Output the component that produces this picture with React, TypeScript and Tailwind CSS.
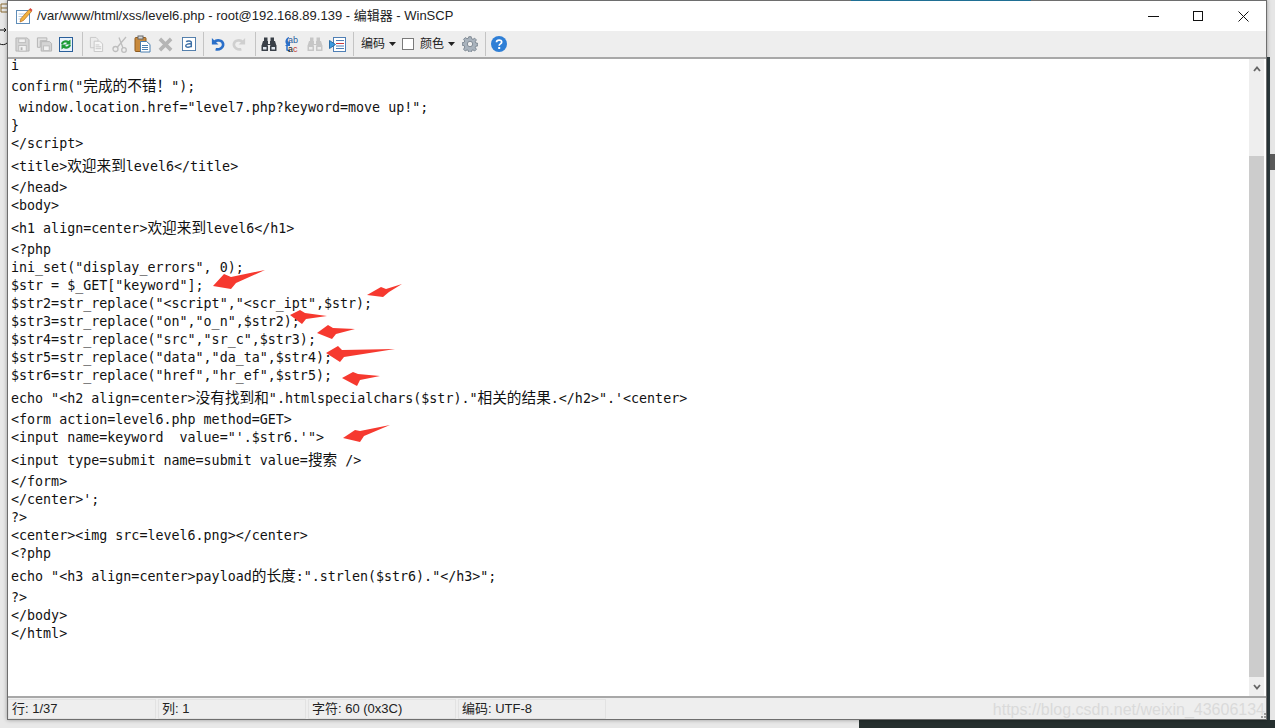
import React from "react";

const mono = "font-['DejaVu_Sans_Mono','Noto_Sans_CJK_SC',monospace]";

const lines: [string, number][] = [
  ["i", 21],
  ['confirm("完成的不错\uff01");', 21],
  [' window.location.href="level7.php?keyword=move up!";', 18],
  ["}", 18],
  ["</script>", 23],
  ["<title>欢迎来到level6</title>", 21],
  ["</head>", 18],
  ["<body>", 23],
  ["<h1 align=center>欢迎来到level6</h1>", 21],
  ["<?php", 18],
  ['ini_set("display_errors", 0);', 18],
  ['$str = $_GET["keyword"];', 18],
  ['$str2=str_replace("<script","<scr_ipt",$str);', 18],
  ['$str3=str_replace("on","o_n",$str2);', 18],
  ['$str4=str_replace("src","sr_c",$str3);', 18],
  ['$str5=str_replace("data","da_ta",$str4);', 18],
  ['$str6=str_replace("href","hr_ef",$str5);', 23],
  ['echo "<h2 align=center>没有找到和".htmlspecialchars($str)."相关的结果.</h2>".\'<center>', 21],
  ["<form action=level6.php method=GET>", 18],
  ['<input name=keyword  value="\'.$str6.\'">', 23],
  ["<input type=submit name=submit value=搜索 />", 21],
  ["</form>", 18],
  ["</center>';", 18],
  ["?>", 18],
  ["<center><img src=level6.png></center>", 18],
  ["<?php", 23],
  ['echo "<h3 align=center>payload的长度:".strlen($str6)."</h3>";', 21],
  ["?>", 18],
  ["</body>", 18],
  ["</html>", 18],
];

const Code = ({ text }: { text: string }) => (
  <>
    {text.split(/([\u4e00-\u9fff\uff01]+)/).map((part, i) =>
      i % 2 === 1 ? (
        <span key={i} className="text-[14.67px] leading-[0] font-['Noto_Sans_CJK_SC',sans-serif]">
          {part}
        </span>
      ) : (
        part
      )
    )}
  </>
);

const sepClass = "h-[24px] w-px shrink-0 bg-[#c4c4c4]";

const Disk = () => (
  <svg width="15" height="15" viewBox="0 0 16 16" fill="none">
    <path d="M1 1h12l2 2v12H1z" fill="#d4d4d4" stroke="#b4b4b4" />
    <rect x="4" y="2" width="7" height="4" fill="#f2f2f2" stroke="#bcbcbc" />
    <rect x="4" y="9" width="8" height="6" fill="#f2f2f2" stroke="#bcbcbc" />
    <rect x="6" y="11" width="2" height="3" fill="#b4b4b4" />
  </svg>
);

const Icons = {
  saveAll: (
    <svg width="17" height="16" viewBox="0 0 18 16" fill="none">
      <path d="M1.500 1.500h10v3h-7v7h-3z" fill="#e2e2e2" stroke="#b4b4b4" />
      <path d="M5.500 5.500h9l2 2v8h-11z" fill="#d4d4d4" stroke="#b4b4b4" />
      <rect x="8" y="10" width="6" height="5" fill="#f2f2f2" stroke="#bcbcbc" />
    </svg>
  ),
  reload: (
    <svg width="14" height="15" viewBox="0 0 14 15" fill="none">
      <rect x=".5" y=".5" width="13" height="14" fill="#e8f1fb" stroke="#2a5f9a" />
      <path d="M2 7C2.500 3.500 7 2.500 9.500 4L11.500 2.500v5h-5l1.500-1.500C6.500 5 4.500 5.500 4 7.500z" fill="#1f9c36" />
      <path d="M12 8c-.5 3.500-5 4.500-7.500 3L2.500 12.500v-5h5L6 9c1.500 1 3.500.5 4-1.500z" fill="#1f9c36" />
    </svg>
  ),
  copy: (
    <svg width="15" height="16" viewBox="0 0 16 17" fill="none" stroke="#c6c6c6">
      <path d="M1.500 1.500h6l2 2v9h-8z" fill="#ececec" />
      <path d="M5.500 5.500h6l3 3v8h-9z" fill="#f6f6f6" />
      <path d="M7 9.500h4M7 11.500h6M7 13.500h6" />
    </svg>
  ),
  cut: (
    <svg width="16" height="17" viewBox="0 0 16 17" fill="none" stroke="#bdbdbd" strokeWidth="1.300">
      <path d="M14 1 5.500 11M7 1.500 11 12" />
      <circle cx="3.500" cy="13" r="2.500" />
      <circle cx="12" cy="14" r="2.300" />
    </svg>
  ),
  paste: (
    <svg width="17" height="18" viewBox="0 0 17 18" fill="none">
      <rect x="1" y="2.500" width="11" height="14" rx="1" fill="#c98a3c" stroke="#8d5a20" />
      <rect x="4" y="1" width="5" height="3" fill="#d8d8d8" stroke="#666" />
      <path d="M6.500 6.500h6l3.500 3v7.500H6.500z" fill="#fff" stroke="#4a7fb0" />
      <path d="M8 10.500h6M8 12.500h6M8 14.500h6" stroke="#4a7fb0" />
    </svg>
  ),
  del: (
    <svg width="15" height="15" viewBox="0 0 16 16" fill="none" stroke="#b5b5b5" strokeWidth="3.800">
      <path d="m2 2 12 12M14 2 2 14" />
    </svg>
  ),
  select: (
    <svg width="14" height="14" viewBox="0 0 15 15" fill="none">
      <rect x=".5" y=".5" width="14" height="14" fill="#fff" stroke="#4a78a8" />
      <path d="M4.500 5c1-1 5.500-1.200 5.500 1v5M10 7.500c-3-.5-6 0-6 2s4.500 1.800 6 0" stroke="#3b6ea5" strokeWidth="1.500" />
    </svg>
  ),
  undo: (
    <svg width="15" height="16" viewBox="0 0 16 16" fill="none">
      <path d="M2 1.500v7h7z" fill="#2a6fc9" />
      <path d="M4.500 6C7 3 13.500 3.500 14 8c.4 4-4 6.500-8 5.500" stroke="#2a6fc9" strokeWidth="2.800" />
    </svg>
  ),
  redo: (
    <svg width="15" height="16" viewBox="0 0 16 16" fill="none">
      <path d="M14 1.500v7H7z" fill="#cfcfcf" />
      <path d="M11.500 6C9 3 2.500 3.500 2 8c-.4 4 4 6.500 8 5.500" stroke="#cfcfcf" strokeWidth="2.800" />
    </svg>
  ),
  find: (c: string, h: string) => (
    <svg width="16" height="16" viewBox="0 0 16 16" fill={c}>
      <path d="M3 1.500h3.500v4H3zM9.500 1.500H13v4H9.500z" />
      <path d="M2 5h5v3h2V5h5l1.500 5h-6V9h-3v1H.5z" />
      <rect x=".5" y="9.500" width="6.500" height="5.500" rx=".5" />
      <rect x="9" y="9.500" width="6.500" height="5.500" rx=".5" />
      <rect x="2" y="11" width="3.500" height="2.500" fill={h} />
      <rect x="10.500" y="11" width="3.500" height="2.500" fill={h} />
    </svg>
  ),
  replace: (
    <svg width="17" height="18" viewBox="0 0 17 18" fill="none">
      <path d="M6 2C2.500 3 1.500 7 3.500 9.500L2 11h5V6L5.500 7.500C4.500 6 4.500 4 6 3z" fill="#2a6fc9" />
      <path d="M4 11v4l3 1" stroke="#2a6fc9" strokeWidth="1.500" />
      <text x="5" y="7.500" fontSize="9" fill="#2a5f9e" fontFamily="Liberation Sans">ab</text>
      <text x="5" y="16.500" fontSize="9" fill="#222" fontFamily="Liberation Sans">a<tspan fill="#c0392b">c</tspan></text>
    </svg>
  ),
  go: (
    <svg width="17" height="15" viewBox="0 0 17 15" fill="none">
      <rect x="4.500" y=".5" width="12" height="14" fill="#fff" stroke="#4f7fb5" />
      <path d="M7 3.500h8M7 11.500h8M7 9h8" stroke="#4f7fb5" />
      <path d="M7 6.500h8" stroke="#d03c3c" />
      <path d="M.5 3.500 6.500 7.500l-6 4z" fill="#3e9be0" stroke="#2c6fa8" />
    </svg>
  ),
  gear: (
    <svg width="16" height="16" viewBox="0 0 16 16" fill="#a9b3bd" stroke="#6f7a85" strokeWidth=".8">
      <path d="M6.800.7h2.400l.4 2 1.400.6 1.700-1.100 1.700 1.700-1.100 1.700.6 1.400 2 .4v2.400l-2 .4-.6 1.400 1.100 1.700-1.700 1.700-1.700-1.100-1.400.6-.4 2H6.800l-.4-2-1.400-.6-1.700 1.100-1.700-1.700L2.700 11l-.6-1.400-2-.4V6.800l2-.4.600-1.400-1.100-1.700 1.700-1.700L5 2.700l1.400-.6z" />
      <circle cx="8" cy="8" r="2.700" fill="#eee" />
    </svg>
  ),
  help: (
    <svg width="16" height="16" viewBox="0 0 16 16">
      <circle cx="8" cy="8" r="8" fill="#2f7fd6" />
      <path d="M5.500 6.200C5.600 3.400 10.700 3.300 10.700 6c0 2-2.500 1.800-2.500 3.700" fill="none" stroke="#fff" strokeWidth="1.700" />
      <rect x="7.200" y="11" width="2" height="2" fill="#fff" />
    </svg>
  ),
};

const B22 = ({ children }: { children: React.ReactNode }) => (
  <div className="flex h-[22px] w-[22px] shrink-0 items-center justify-center">{children}</div>
);
const B23 = ({ children }: { children: React.ReactNode }) => (
  <div className="flex h-[22px] w-[23px] shrink-0 items-center justify-center">{children}</div>
);

const Caret = () => (
  <svg width="7" height="4" viewBox="0 0 7 4" className="ml-[4px]">
    <path d="M0 0h7L3.500 4z" fill="#222" />
  </svg>
);

const Cell = ({ children }: { children: string }) => (
  <div className="mr-[2px] flex h-full w-[148px] items-center border border-[#e2e2e2] pl-[3px] text-[13px] text-[#222]">
    {children}
  </div>
);

const arrows = [
  "213,286 224,274 231,277 265,270 236,283 231,289",
  "367,295 381,287 386,289 402,284 389,292 383,297",
  "290,315 300,310 305,313 327,316 306,319 302,324",
  "317,333 328,325 333,328 355,329 336,334 332,339",
  "326,353 338,346 342,350 395,349 344,357 340,362",
  "342,378 353,372 358,374 380,376 360,380 357,386",
  "343,438 355,430 360,431 390,425 364,436 360,442",
];

export default function App() {
  return (
    <div className="relative flex h-[728px] w-[1275px] overflow-hidden bg-[#e8e8e8] font-['Liberation_Sans','Noto_Sans_CJK_SC',sans-serif]">
      <div className="relative w-[7px] shrink-0">
        <svg width="7" height="60" viewBox="0 0 7 60" className="absolute left-0 top-0">
          <path d="M1 4h6M1 8h6M1 12h6M1 4v8" stroke="#8a6a30" fill="none" />
          <path d="M0 30h6M4 28l2 2-2 2" stroke="#111" fill="none" />
          <path d="M0 44c2 1 5 1 7-1" stroke="#111" fill="none" />
        </svg>
      </div>
      <div className="z-10 flex h-[720px] w-[1260px] shrink-0 flex-col border border-[#6e6e6e] bg-white shadow-[0_0_4px_rgba(0,0,0,0.35)]">
        <div className="flex h-[30px] shrink-0 items-center bg-white pl-[8px]">
          <svg width="17" height="18" viewBox="0 0 17 18" fill="none">
            <rect x=".5" y="3.500" width="13" height="13" fill="#fff" stroke="#5f8db8" />
            <path d="M2.500 7h8M2.500 9.500h6M2.500 12h4" stroke="#b8cde0" />
            <path d="m5 11.500 8-9 2.500 2-8 9-3.500 1.500z" fill="#f2b33d" stroke="#b5671e" strokeWidth=".7" />
            <path d="m13 2.500 1.300-1.500 2.200 2-1.200 1.500z" fill="#d9483b" />
          </svg>
          <div className="ml-[4px] text-[13px] text-[#222]">
            /var/www/html/xss/level6.php - root@192.168.89.139 - 编辑器 - WinSCP
          </div>
          <div className="ml-auto flex items-center">
            <svg width="11" height="1" className="mr-[34px]"><rect width="11" height="1" fill="#111" /></svg>
            <svg width="10" height="10" className="mr-[35px]"><rect x=".5" y=".5" width="9" height="9" fill="none" stroke="#111" /></svg>
            <svg width="11" height="11" className="mr-[17px]"><path d="m.5.500 10 10M10.500.500l-10 10" stroke="#111" /></svg>
          </div>
        </div>
        <div className="flex h-[28px] shrink-0 items-center border-b-2 border-[#a8a8a8] bg-[#eeeeee] pl-[3px]">
          <B22><Disk /></B22>
          <B22>{Icons.saveAll}</B22>
          <B22>{Icons.reload}</B22>
          <div className={`ml-[5px] mr-[2px] ${sepClass}`} />
          <B23>{Icons.copy}</B23>
          <B23>{Icons.cut}</B23>
          <B23>{Icons.paste}</B23>
          <B23>{Icons.del}</B23>
          <B23>{Icons.select}</B23>
          <div className={`ml-[3px] mr-[2px] ${sepClass}`} />
          <B22>{Icons.undo}</B22>
          <B22>{Icons.redo}</B22>
          <div className={`ml-[5px] mr-px ${sepClass}`} />
          <B23>{Icons.find("#3a4048", "#dfe6ee")}</B23>
          <B23>{Icons.replace}</B23>
          <B23>{Icons.find("#c6c6c6", "#ececec")}</B23>
          <B23>{Icons.go}</B23>
          <div className={`ml-[4px] ${sepClass}`} />
          <div className="ml-[7px] flex items-center text-[12px] text-[#222]">
            编码
            <Caret />
          </div>
          <div className="ml-[6px] h-[12px] w-[12px] border border-[#7a7a7a] bg-white" />
          <div className="ml-[6px] flex items-center text-[12px] text-[#222]">
            颜色
            <Caret />
          </div>
          <div className="ml-[7px] shrink-0">{Icons.gear}</div>
          <div className={`ml-[7px] ${sepClass}`} />
          <div className="ml-[5px] shrink-0">{Icons.help}</div>
        </div>
        <div className="flex min-h-0 flex-1 border-b-2 border-[#a8a8a8]">
          <div className={`min-w-0 flex-1 overflow-hidden text-[13.33px] text-[#111] ${mono}`}>
            <div className="-mt-[2px]">
              {lines.map(([t, h], i) => (
                <div key={i} className="whitespace-pre pl-[3px] leading-[18px]" style={{ height: h }}>
                  <Code text={t} />
                </div>
              ))}
            </div>
          </div>
          <div className="mr-[2px] flex w-[15px] shrink-0 flex-col bg-[#eeeeee]">
            <div className="flex h-[19px] items-center justify-center">
              <svg width="8" height="6" viewBox="0 0 8 6"><path d="M1 5 4 1.500 7 5" fill="none" stroke="#666" strokeWidth="1.800" /></svg>
            </div>
            <div className="h-[78px]" />
            <div className="flex-1 bg-[#cccccc]" />
            <div className="flex h-[19px] items-center justify-center">
              <svg width="8" height="6" viewBox="0 0 8 6"><path d="M1 1 4 4.500 7 1" fill="none" stroke="#666" strokeWidth="1.800" /></svg>
            </div>
          </div>
        </div>
        <div className="flex h-[21px] shrink-0 items-stretch bg-[#eeeeee] pt-[1px]">
          <Cell>行: 1/37</Cell>
          <Cell>列: 1</Cell>
          <Cell>字符: 60 (0x3C)</Cell>
          <Cell>编码: UTF-8</Cell>
        </div>
      </div>
      <div className="relative flex-1 bg-[#e6e6e6]">
        <div className="absolute left-0 top-[57px] h-[663px] w-[3px] bg-[#2d3a3e]" />
        <div className="absolute left-[3px] top-[154px] h-[16px] w-[5px] bg-[#5a5a5a]" />
      </div>
      <div className="absolute bottom-0 left-[859px] z-0 h-[8px] w-[416px] bg-[#26302f]" />
      <div className="absolute left-[851px] top-0 z-20 h-px w-[180px] bg-[#1f6f94]" />
      <div className="absolute right-[10px] top-[700px] z-20 text-[16px] leading-[20px] text-[#dadada]">
        https://blog.csdn.net/weixin_43606134
      </div>
      <svg width="7" height="7" viewBox="0 0 7 7" className="absolute left-[1260px] top-[713px] z-20" fill="#9c9c9c">
        <rect x="4" y="0" width="2" height="2" />
        <rect x="1" y="3" width="2" height="2" />
        <rect x="4" y="3" width="2" height="2" />
      </svg>
      <svg width="1275" height="728" className="pointer-events-none absolute left-0 top-0 z-30">
        {arrows.map((p) => (
          <polygon key={p} points={p} fill="#f6392f" />
        ))}
      </svg>
    </div>
  );
}
